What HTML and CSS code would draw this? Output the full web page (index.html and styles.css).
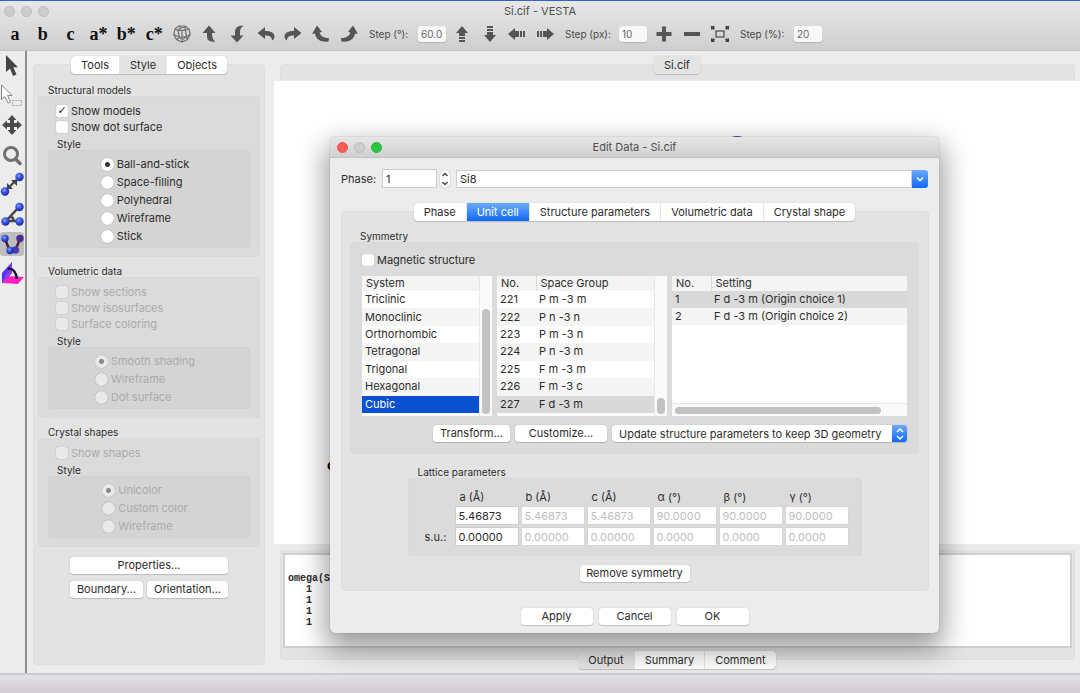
FILE: index.html
```html
<!DOCTYPE html>
<html lang="en">
<head>
    <meta charset="UTF-8">
    <meta name="viewport" content="width=device-width, initial-scale=1.0">
    <title>Si.cif - VESTA</title>
    <link rel="stylesheet" href="styles.css">
</head>
<body>
    <header class="app-header">
        <div class="titlebar">
            <div class="lights"><span class="light"></span><span class="light"></span><span class="light"></span></div>
            <h1 class="title">Si.cif - VESTA</h1>
        </div>
        <div class="toolbar">
            <div class="view-buttons">
                <button class="tool axis">a</button>
                <button class="tool axis">b</button>
                <button class="tool axis">c</button>
                <button class="tool axis">a*</button>
                <button class="tool axis">b*</button>
                <button class="tool axis">c*</button>
                <button class="tool" aria-label="Standard orientation">
                    <svg width="18" height="18" viewBox="0 0 18 18" fill="none" stroke="#707070" stroke-width="1.200"><path d="M5.500 1h6.500l4 3 1.200 5.500-2.700 5L9 17.200l-5.500-2.700L.8 9.500 2 4zM5 5.500l7.500-.5 1 6.500-7 1zM2 4l3 1.500M5.500 1 8 2.500h4L12 1M8 2.500 5 5.500M12 2.500l.5 2.500M16 4l-3.500 1M17.200 9.500l-3.700 2M14.500 14.500l-1-3M6.500 12.500 3.500 14.500M6.500 12.500.8 9.500M9 17.200l.5-2.700 4-3M9.500 14.500l-3-2M9 5.500v6.500"/></svg>
                </button>
                <button class="tool" aria-label="Rotate up">
                    <svg width="18" height="18" viewBox="0 0 18 18" fill="#555"><path d="M8 .5 14.500 8H11c0 3.500.5 6.500 3 8.500-4.500.8-8-1-8-5V8H1.500z"/></svg>
                </button>
                <button class="tool" aria-label="Rotate down">
                    <svg width="18" height="18" viewBox="0 0 18 18" fill="#555"><path d="M8 17.500 1.500 10.500H6V7c0-4 3-7 8.500-6-3 1.500-3.500 3.500-3.500 6v3.500h3.500z"/></svg>
                </button>
                <button class="tool" aria-label="Rotate left">
                    <svg width="18" height="18" viewBox="0 0 18 18" fill="#555"><path d="M.5 8 8 2v4c5.500-.5 9.500 2 9.500 5.500 0 2-1 3.300-2.500 4C15 11.500 12.500 10.500 8 10.500V14z"/></svg>
                </button>
                <button class="tool" aria-label="Rotate right">
                    <svg width="18" height="18" viewBox="0 0 18 18" fill="#555"><path d="M17.500 8 10 2v4C4.500 5.500.5 8 .5 11.500c0 2 1 3.300 2.500 4C3 11.500 5.500 10.500 10 10.500V14z"/></svg>
                </button>
                <button class="tool" aria-label="Rotate counterclockwise">
                    <svg width="18" height="18" viewBox="0 0 18 18" fill="#555"><path d="M5 .5 10 7 7.500 7.500c1 3.500 4 5.500 9.500 5.500l-.5 3.500C9 17.500 4 14.500 3 8.500L0 9z"/></svg>
                </button>
                <button class="tool" aria-label="Rotate clockwise">
                    <svg width="18" height="18" viewBox="0 0 18 18" fill="#555"><path d="M13 .5 8 7l2.500.5C9.500 11 6.500 13 1 13l.5 3.500C9 17.500 14 14.500 15 8.500l3 .5z"/></svg>
                </button>
            </div>
            <label class="step" for="stepDeg">Step (°):</label>
            <input class="step-input" id="stepDeg" type="text" value="60.0">
            <div class="move-buttons">
                <button class="tool" aria-label="Move up">
                    <svg width="18" height="18" viewBox="0 0 18 18" fill="#555"><path d="M9 1l6 7h-3v3H6V8H3zM6 12h6v2H6zM6 15h6v2H6z"/></svg>
                </button>
                <button class="tool" aria-label="Move down">
                    <svg width="18" height="18" viewBox="0 0 18 18" fill="#555"><path d="M9 17l6-7h-3V7H6v3H3zM6 4h6v2H6zM6 1h6v2H6z"/></svg>
                </button>
                <button class="tool" aria-label="Move left">
                    <svg width="18" height="18" viewBox="0 0 18 18" fill="#555"><path d="M0 9l7-6v3h4v6H7v3zM12 6h2v6h-2zM15 6h2v6h-2z"/></svg>
                </button>
                <button class="tool" aria-label="Move right">
                    <svg width="18" height="18" viewBox="0 0 18 18" fill="#555"><path d="M18 9l-7-6v3H7v6h4v3zM4 6h2v6H4zM1 6h2v6H1z"/></svg>
                </button>
            </div>
            <label class="step" for="stepPx">Step (px):</label>
            <input class="step-input" id="stepPx" type="text" value="10">
            <div class="zoom-buttons">
                <button class="tool" aria-label="Zoom in">
                    <svg width="18" height="18" viewBox="0 0 18 18" fill="#555"><path d="M7 1.500h4V7h5.500v4H11v5.500H7V11H1.500V7H7z"/></svg>
                </button>
                <button class="tool" aria-label="Zoom out">
                    <svg width="18" height="18" viewBox="0 0 18 18" fill="#555"><path d="M1 7h16v4H1z"/></svg>
                </button>
                <button class="tool" aria-label="Fit to screen">
                    <svg width="20" height="18" viewBox="0 0 20 18"><path d="M6 6h8v6H6z" fill="none" stroke="#666" stroke-width="1.500"/><path d="M1 1h4L4 2.500l1 1L3.500 5l-1-1L1 5zM19 1h-4l1 1.500-1 1L16.500 5l1-1L19 5zM1 17h4l-1-1.500 1-1L3.500 13l-1 1L1 13zM19 17h-4l1-1.500-1-1 1.500-1.500 1 1 1.500-1z" fill="#444"/></svg>
                </button>
            </div>
            <label class="step" for="stepPct">Step (%):</label>
            <input class="step-input" id="stepPct" type="text" value="20">
        </div>
    </header>

    <main class="workspace">
        <nav class="side-tools">
            <button class="side-tool" aria-label="Rotate mode">
                <svg width="24" height="26" viewBox="0 0 24 26"><path d="M6 2v17l4-3.500 3 7.500 3.500-1.500-3.200-7.300H18z" fill="#444"/></svg>
            </button>
            <button class="side-tool" aria-label="Select mode">
                <svg width="24" height="26" viewBox="0 0 24 26" stroke="#888"><path d="M1.500 3v14.500l3.300-3L8 21l2.500-1.200-3-6.300H12z" fill="#fff"/><path d="M12.500 18.500h9v5h-9z" fill="none" stroke="#aaa" stroke-dasharray="2 1"/></svg>
            </button>
            <button class="side-tool" aria-label="Translate mode">
                <svg width="24" height="26" viewBox="0 0 24 26"><path d="M12 3l4.500 5H14v3h3V8.500l5 4.500-5 4.500V15h-3v3h2.500L12 23l-4.500-5H10v-3H7v2.500L2 13l5-4.500V11h3V8H7.500z" fill="#4a4a4a"/></svg>
            </button>
            <button class="side-tool" aria-label="Magnify mode">
                <svg width="24" height="26" viewBox="0 0 24 26" fill="none" stroke="#707070"><circle cx="11" cy="12" r="6.500" stroke-width="3"/><path d="M15.500 17l4.500 4.500" stroke-width="3.500" stroke-linecap="round"/></svg>
            </button>
            <button class="side-tool" aria-label="Distance">
                <svg width="24" height="26" viewBox="0 0 24 26">
                    <defs><radialGradient id="ball" cx=".4" cy=".35" r=".65"><stop offset="0" stop-color="#8ea4ff"/><stop offset=".5" stop-color="#3450e4"/><stop offset="1" stop-color="#1a279c"/></radialGradient></defs>
                    <path d="M8 17.500l8-8.500" stroke="#444" stroke-width="2"/><path d="M11 9h6v6zM7 12v6h6z" fill="#444"/><circle cx="19.500" cy="6" r="4.200" fill="url(#ball)"/><circle cx="5" cy="20.500" r="4.200" fill="url(#ball)"/></svg>
            </button>
            <button class="side-tool" aria-label="Angle">
                <svg width="24" height="26" viewBox="0 0 24 26"><path d="M19 6 6 20h13M9.500 16c3-.5 4 1 4 4" fill="none" stroke="#444" stroke-width="2.500"/><circle cx="19.500" cy="6" r="4.200" fill="url(#ball)"/><circle cx="5.500" cy="20.500" r="4.200" fill="url(#ball)"/><circle cx="19.500" cy="20.500" r="4.200" fill="url(#ball)"/></svg>
            </button>
            <button class="side-tool selected" aria-label="Dihedral angle">
                <svg width="24" height="26" viewBox="0 0 24 26"><path d="M5 8l4.500 11h6L20 8" fill="none" stroke="#4c2222" stroke-width="2.500"/><circle cx="5" cy="7.500" r="3.700" fill="url(#ball)"/><circle cx="20" cy="7.500" r="3.700" fill="#4b2b96"/><circle cx="15.500" cy="19" r="3.700" fill="#4b3bb0"/><circle cx="10" cy="19.500" r="3.700" fill="url(#ball)"/></svg>
            </button>
            <button class="side-tool" aria-label="Interfacial angle">
                <svg width="24" height="26" viewBox="0 0 24 26"><path d="M2 23 8 16l16 1-6 7z" fill="#ff1fc0"/><path d="M2 23V13L12 2v11z" fill="#4a35f0"/><path d="M2 23 12 13V2L5 16z" fill="#8a3df0"/><path d="M8 9c5-1 8 3 9 10" fill="none" stroke="#1c1030" stroke-width="2.500"/></svg>
            </button>
        </nav>

        <aside class="style-pane">
            <div class="tabs" role="tablist">
                <button class="tab" role="tab">Tools</button>
                <button class="tab pressed" role="tab" aria-selected="true">Style</button>
                <button class="tab" role="tab">Objects</button>
            </div>
            <div class="panel style-panel">
                <h2 class="group-title">Structural models</h2>
                <div class="group">
                    <label class="check"><input type="checkbox" checked>Show models</label>
                    <label class="check"><input type="checkbox">Show dot surface</label>
                    <h3 class="sub-title">Style</h3>
                    <div class="subgroup">
                        <div class="radios">
                            <label class="radio"><input type="radio" name="model" checked>Ball-and-stick</label>
                            <label class="radio"><input type="radio" name="model">Space-filling</label>
                            <label class="radio"><input type="radio" name="model">Polyhedral</label>
                            <label class="radio"><input type="radio" name="model">Wireframe</label>
                            <label class="radio"><input type="radio" name="model">Stick</label>
                        </div>
                    </div>
                </div>
                <h2 class="group-title">Volumetric data</h2>
                <div class="group">
                    <label class="check disabled"><input type="checkbox" disabled>Show sections</label>
                    <label class="check disabled"><input type="checkbox" disabled>Show isosurfaces</label>
                    <label class="check disabled"><input type="checkbox" disabled>Surface coloring</label>
                    <h3 class="sub-title">Style</h3>
                    <div class="subgroup">
                        <div class="radios">
                            <label class="radio disabled"><input type="radio" name="volume" checked disabled>Smooth shading</label>
                            <label class="radio disabled"><input type="radio" name="volume" disabled>Wireframe</label>
                            <label class="radio disabled"><input type="radio" name="volume" disabled>Dot surface</label>
                        </div>
                    </div>
                </div>
                <h2 class="group-title">Crystal shapes</h2>
                <div class="group">
                    <label class="check disabled"><input type="checkbox" disabled>Show shapes</label>
                    <h3 class="sub-title">Style</h3>
                    <div class="subgroup">
                        <div class="radios">
                            <label class="radio disabled"><input type="radio" name="shape" checked disabled>Unicolor</label>
                            <label class="radio disabled"><input type="radio" name="shape" disabled>Custom color</label>
                            <label class="radio disabled"><input type="radio" name="shape" disabled>Wireframe</label>
                        </div>
                    </div>
                </div>
                <div class="panel-buttons">
                    <button class="button wide">Properties...</button>
                    <button class="button">Boundary...</button>
                    <button class="button">Orientation...</button>
                </div>
            </div>
        </aside>

        <section class="viewer">
            <div class="tabs">
                <button class="tab pressed">Si.cif</button>
            </div>
            <div class="panel document-bar"></div>
            <div class="canvas">
                <span class="atom"></span>
                <span class="origin">o</span>
            </div>
            <div class="panel output-panel">
                <pre class="output">
omega(S
   1
   1
   1
   1</pre>
            </div>
            <div class="tabs output-tabs" role="tablist">
                <button class="tab pressed" role="tab" aria-selected="true">Output</button>
                <button class="tab" role="tab">Summary</button>
                <button class="tab" role="tab">Comment</button>
            </div>
        </section>
    </main>
    <footer class="statusbar"></footer>

    <div class="dialog" role="dialog" aria-labelledby="dialogTitle">
        <div class="dialog-titlebar">
            <div class="lights"><span class="light red"></span><span class="light"></span><span class="light green"></span></div>
            <h2 class="title" id="dialogTitle">Edit Data - Si.cif</h2>
        </div>
        <div class="phase-row">
            <label for="phase">Phase:</label>
            <input class="field phase-number" id="phase" type="text" value="1">
            <button class="stepper" aria-label="Change phase">
                <svg width="8" height="14" viewBox="0 0 8 14" fill="none" stroke="#444" stroke-width="1.500"><path d="M1.500 4 4 1.500 6.500 4M1.500 10 4 12.500 6.500 10"/></svg>
            </button>
            <div class="combo">
                <input class="field" type="text" value="Si8" aria-label="Phase name">
                <button class="combo-button" aria-label="Show phases">
                    <svg width="10" height="8" viewBox="0 0 10 8" fill="none" stroke="#fff" stroke-width="1.500"><path d="M2 2.500 5 5.500 8 2.500"/></svg>
                </button>
            </div>
        </div>
        <div class="tabs dialog-tabs" role="tablist">
            <button class="tab" role="tab">Phase</button>
            <button class="tab active" role="tab" aria-selected="true">Unit cell</button>
            <button class="tab" role="tab">Structure parameters</button>
            <button class="tab" role="tab">Volumetric data</button>
            <button class="tab" role="tab">Crystal shape</button>
        </div>
        <div class="panel dialog-panel">
            <h3 class="group-title">Symmetry</h3>
            <div class="group symmetry">
                <label class="check"><input type="checkbox">Magnetic structure</label>
                <div class="lists">
                    <div class="list system-list">
                        <table class="full">
                            <thead><tr><th>System</th></tr></thead>
                            <tbody>
                                <tr><td>Triclinic</td></tr>
                                <tr><td>Monoclinic</td></tr>
                                <tr><td>Orthorhombic</td></tr>
                                <tr><td>Tetragonal</td></tr>
                                <tr><td>Trigonal</td></tr>
                                <tr><td>Hexagonal</td></tr>
                                <tr class="current"><td>Cubic</td></tr>
                            </tbody>
                        </table>
                        <div class="scrollbar"><span class="thumb long"></span></div>
                    </div>
                    <div class="list group-list">
                        <table class="full">
                            <thead><tr><th class="number">No.</th><th>Space Group</th></tr></thead>
                            <tbody>
                                <tr><td>221</td><td>P m -3 m</td></tr>
                                <tr><td>222</td><td>P n -3 n</td></tr>
                                <tr><td>223</td><td>P m -3 n</td></tr>
                                <tr><td>224</td><td>P n -3 m</td></tr>
                                <tr><td>225</td><td>F m -3 m</td></tr>
                                <tr><td>226</td><td>F m -3 c</td></tr>
                                <tr class="chosen"><td>227</td><td>F d -3 m</td></tr>
                            </tbody>
                        </table>
                        <div class="scrollbar"><span class="thumb short"></span></div>
                    </div>
                    <div class="list setting-list">
                        <table>
                            <thead><tr><th class="number">No.</th><th>Setting</th></tr></thead>
                            <tbody>
                                <tr class="chosen"><td>1</td><td>F d -3 m (Origin choice 1)</td></tr>
                                <tr><td>2</td><td>F d -3 m (Origin choice 2)</td></tr>
                            </tbody>
                        </table>
                        <div class="scrollbar horizontal"><span class="thumb"></span></div>
                    </div>
                </div>
                <div class="symmetry-actions">
                    <button class="button transform">Transform...</button>
                    <button class="button customize">Customize...</button>
                    <div class="select">
                        <select aria-label="Update mode">
                            <option>Update structure parameters to keep 3D geometry</option>
                        </select>
                        <span class="select-arrows">
                            <svg width="8" height="14" viewBox="0 0 8 14" fill="none" stroke="#fff" stroke-width="1.500"><path d="M1 5 4 2 7 5M1 9l3 3 3-3"/></svg>
                        </span>
                    </div>
                </div>
            </div>
            <div class="lattice">
                <h3 class="group-title">Lattice parameters</h3>
                <div class="group">
                    <table class="lattice-table">
                        <thead>
                            <tr><td></td><th>a (Å)</th><th>b (Å)</th><th>c (Å)</th><th>α (°)</th><th>β (°)</th><th>γ (°)</th></tr>
                        </thead>
                        <tbody>
                            <tr>
                                <th></th>
                                <td><input class="field" type="text" value="5.46873" aria-label="a"></td>
                                <td><input class="field" type="text" value="5.46873" aria-label="b" disabled></td>
                                <td><input class="field" type="text" value="5.46873" aria-label="c" disabled></td>
                                <td><input class="field" type="text" value="90.0000" aria-label="alpha" disabled></td>
                                <td><input class="field" type="text" value="90.0000" aria-label="beta" disabled></td>
                                <td><input class="field" type="text" value="90.0000" aria-label="gamma" disabled></td>
                            </tr>
                            <tr>
                                <th>s.u.:</th>
                                <td><input class="field" type="text" value="0.00000" aria-label="s.u. of a"></td>
                                <td><input class="field" type="text" value="0.00000" aria-label="s.u. of b" disabled></td>
                                <td><input class="field" type="text" value="0.00000" aria-label="s.u. of c" disabled></td>
                                <td><input class="field" type="text" value="0.0000" aria-label="s.u. of alpha" disabled></td>
                                <td><input class="field" type="text" value="0.0000" aria-label="s.u. of beta" disabled></td>
                                <td><input class="field" type="text" value="0.0000" aria-label="s.u. of gamma" disabled></td>
                            </tr>
                        </tbody>
                    </table>
                </div>
            </div>
            <button class="button remove">Remove symmetry</button>
        </div>
        <div class="dialog-buttons">
            <button class="button">Apply</button>
            <button class="button">Cancel</button>
            <button class="button">OK</button>
        </div>
    </div>
</body>
</html>
```
FILE: styles.css
```css
:root {
    --window: #ececec;
    --panel: #e3e3e3;
    --group: #dbdbdb;
    --subgroup: #d4d4d4;
    --text: #2c2c2c;
    --disabled: #ababab;
    --blue: linear-gradient(#6cabfb, #1068f8);
}

* {
    box-sizing: border-box;
    margin: 0;
    padding: 0;
}

body {
    font-family: Inter, "Liberation Sans", sans-serif;
    font-size: 11px;
    line-height: 16px;
    color: var(--text);
    background: var(--window);
    height: 100vh;
    display: flex;
    flex-direction: column;
    overflow: hidden;
}

button,
input,
select {
    font: inherit;
    color: inherit;
    border: none;
    background: none;
}

h1,
h2,
h3 {
    font-weight: 400;
}

/* window header */
.app-header {
    height: 51px;
    border-top: 1px solid #3563c4;
    border-bottom: 1px solid #c3c3c3;
    background: linear-gradient(#e7e7e7, #cfcfcf);
}

.titlebar,
.dialog-titlebar {
    display: grid;
    grid-template-columns: 1fr auto 1fr;
    align-items: center;
    height: 20px;
    color: #505050;
}

.title {
    font-size: 11px;
    line-height: 16px;
}

.lights {
    display: flex;
    gap: 6px;
    padding-left: 4px;
}

.light {
    width: 11px;
    height: 11px;
    border-radius: 50%;
    background: #cdcdcd;
    border: 1px solid #bdbdbd;
}

.light.red {
    background: #fc5b57;
    border-color: #ec5350;
}

.light.green {
    background: #2ac840;
    border-color: #25b539;
}

.toolbar {
    display: flex;
    align-items: center;
    height: 25px;
    padding-left: 1px;
}

.tool {
    display: flex;
    align-items: center;
    justify-content: center;
    height: 24px;
}

.axis {
    font-family: "Liberation Serif", serif;
    font-size: 18px;
    font-weight: 700;
    color: #111;
}

.view-buttons {
    display: grid;
    grid-template-columns: repeat(13, 1fr);
    width: 362px;
}

.move-buttons {
    display: grid;
    grid-template-columns: repeat(4, 1fr);
    width: 111px;
    margin-left: 2px;
}

.zoom-buttons {
    display: grid;
    grid-template-columns: repeat(3, 1fr);
    width: 84px;
    margin-left: 3px;
}

.step {
    width: 49px;
    margin-left: 6px;
    font-size: 10px;
    color: #4a4a4a;
}

.step-input {
    width: 28px;
    height: 16px;
    padding: 0 3px;
    border-radius: 3px;
    background: #f8f8f8;
    box-shadow: 0 1px 1px rgba(0, 0, 0, 0.15);
    font-size: 10px;
    color: #6a6a6a;
}

.move-buttons + .step,
.zoom-buttons + .step {
    width: 54px;
    margin-left: 6px;
}

/* workspace */
.workspace {
    flex: 1;
    display: flex;
    min-height: 0;
}

.side-tools {
    width: 25px;
    display: grid;
    grid-template-rows: repeat(8, 1fr);
    height: 237px;
}

.side-tool {
    display: flex;
    align-items: center;
    justify-content: center;
    min-height: 0;
    width: 24px;
}

.side-tool.selected {
    align-self: center;
    height: 24px;
    border-radius: 3px;
    background: #bdbdbd;
}

.panel {
    background: var(--panel);
    border: 1px solid #dfdfdf;
    border-radius: 4px;
}

.tabs {
    display: flex;
    align-self: center;
    z-index: 1;
    height: 18px;
    border-radius: 4px;
    background: #fff;
    box-shadow: 0 0 1px rgba(0, 0, 0, 0.3), 0 1px 1px rgba(0, 0, 0, 0.15);
    overflow: hidden;
}

.tab {
    padding: 0 10px;
    line-height: 18px;
    white-space: nowrap;
    border-right: 1px solid #e6e6e6;
}

.tab:last-child {
    border-right: none;
}

.tab.pressed {
    background: #e4e4e4;
}

.tab.active {
    background: var(--blue);
    color: #fff;
}

.style-pane {
    width: 240px;
    padding: 5px 0 8px 6px;
    border-left: 2px solid #8e8e8e;
    display: flex;
    flex-direction: column;
}

.style-panel {
    flex: 1;
    margin-top: -10px;
    padding: 11px 4px 0;
}

.group-title,
.sub-title {
    font-size: 10px;
    line-height: 12px;
    padding-left: 10px;
}

.group-title {
    margin-top: 8px;
}

.group {
    padding: 6px 9px 8px;
    border: 1px solid #d8d8d8;
    border-radius: 4px;
    background: var(--group);
}

.sub-title {
    margin-top: 3px;
    padding-left: 9px;
}

.subgroup {
    display: flex;
    justify-content: center;
    padding: 4px 8px 2px 0;
    border: 1px solid #d1d1d1;
    border-radius: 3px;
    background: var(--subgroup);
}

.check,
.radio {
    display: flex;
    align-items: center;
    gap: 3px;
    height: 16px;
    padding-left: 8px;
}

.radio {
    height: 18px;
    padding-left: 0;
}

.check input,
.radio input {
    appearance: none;
    width: 12px;
    height: 12px;
    border-radius: 2px;
    background: #fff;
    box-shadow: 0 0 1px rgba(0, 0, 0, 0.4);
}

.radio input {
    width: 13px;
    height: 13px;
    border-radius: 50%;
}

.check input:checked::after {
    content: "✓";
    display: block;
    font-family: "DejaVu Sans", sans-serif;
    font-size: 11px;
    font-weight: 700;
    line-height: 12px;
    text-align: center;
}

.radio input:checked {
    background: radial-gradient(circle, #333 2px, #fff 3px);
}

.disabled {
    color: var(--disabled);
}

.check.disabled input,
.radio.disabled input {
    background: #e9e9e9;
}

.radio.disabled input:checked {
    background: radial-gradient(circle, #888 2px, #e9e9e9 3px);
}

.button {
    height: 17px;
    border-radius: 3px;
    background: #fff;
    line-height: 17px;
    white-space: nowrap;
    box-shadow: 0 0 1px rgba(0, 0, 0, 0.3), 0 1px 1px rgba(0, 0, 0, 0.15);
}

.panel-buttons {
    display: grid;
    grid-template-columns: 73px 81px;
    gap: 7px 4px;
    justify-content: center;
    padding-top: 10px;
}

.button.wide {
    grid-column: span 2;
}

/* viewer */
.viewer {
    flex: 1;
    display: flex;
    flex-direction: column;
    margin-left: 9px;
    padding-top: 5px;
}

.document-bar {
    height: 16px;
    margin: -10px 5px 0 6px;
    border-bottom: none;
    border-radius: 4px 4px 0 0;
}

.document-bar + .canvas {
    margin-top: 1px;
}

.canvas {
    position: relative;
    flex: 1;
    background: #fff;
}

.atom {
    position: absolute;
    top: 55px;
    left: 449px;
    width: 28px;
    height: 28px;
    border-radius: 50%;
    background: #4a4a9a;
}

.origin {
    position: absolute;
    top: 376px;
    left: 53px;
    font-size: 14px;
    font-weight: 700;
    color: #000;
}

.output-panel {
    margin: 6px 5px 0 6px;
    padding: 2px 2px 11px;
    height: 110px;
}

.output {
    height: 95px;
    padding: 18px 3px 0;
    border: 2px solid #d0d0d0;
    background: #fff;
    font-family: "Liberation Mono", monospace;
    font-size: 10px;
    font-weight: 700;
    line-height: 11px;
}

.output-tabs {
    margin: -9px 0 4px;
}

.statusbar {
    height: 20px;
    border-top: 2px solid #cbcbcb;
    background: linear-gradient(#e4e2e6, #d0ced3);
}

/* edit data dialog */
.dialog {
    position: absolute;
    top: 137px;
    left: 330px;
    right: 141px;
    z-index: 2;
    display: flex;
    flex-direction: column;
    padding-bottom: 8px;
    border-radius: 5px;
    background: var(--window);
    box-shadow: 0 0 1px rgba(0, 0, 0, 0.5), 0 12px 28px 4px rgba(0, 0, 0, 0.4);
}

.dialog-titlebar {
    height: 21px;
    border-bottom: 1px solid #c3c3c3;
    border-radius: 5px 5px 0 0;
    background: linear-gradient(#e6e6e6, #d0d0d0);
}

.dialog-titlebar .lights {
    padding-left: 7px;
}

.phase-row {
    display: flex;
    align-items: center;
    height: 19px;
    margin: 11px 11px 0;
}

.phase-row label {
    width: 41px;
}

.field {
    width: 100%;
    height: 19px;
    padding: 0 3px;
    border: 1px solid #cdcdcd;
    background: #fff;
}

.field:disabled {
    border-color: #d6d6d6;
    color: #bebebe;
}

.phase-number {
    width: 55px;
}

.stepper {
    display: flex;
    align-items: center;
    justify-content: center;
    width: 10px;
    height: 18px;
    margin: 0 6px 0 3px;
    border-radius: 5px;
    background: #fff;
    box-shadow: 0 0 1px rgba(0, 0, 0, 0.5);
}

.combo {
    flex: 1;
    display: flex;
}

.combo-button {
    display: flex;
    align-items: center;
    justify-content: center;
    width: 16px;
    height: 18px;
    border-radius: 0 3px 3px 0;
    background: var(--blue);
}

.combo .field {
    flex: 1;
    height: 18px;
}

.dialog-tabs {
    margin-top: 15px;
}

.dialog-panel {
    display: flex;
    flex-direction: column;
    margin: -10px 10px 0 11px;
    padding: 10px 9px 8px 8px;
}

.symmetry {
    padding: 9px 11px 11px;
}

.symmetry .check {
    padding-left: 0;
}

.lists {
    display: flex;
    gap: 5px;
    height: 140px;
    margin-top: 8px;
}

.list {
    display: flex;
    align-items: flex-start;
    background: #fff;
}

.system-list {
    flex: 130;
}

.group-list {
    flex: 170;
}

.setting-list {
    flex: 235;
    flex-direction: column;
    justify-content: space-between;
}

.list table {
    width: 100%;
    flex: 1;
    border-collapse: collapse;
    line-height: 15px;
}

.setting-list table {
    flex: none;
}

.list .full {
    height: 137px;
}

.list th {
    height: 15px;
    padding-left: 4px;
    font-weight: 400;
    text-align: left;
    background: #f4f4f4;
}

.list .number {
    width: 39px;
    border-right: 1px solid #dadada;
}

.list td {
    padding: 1px 0 1px 3px;
}

.list tbody tr:nth-child(even) {
    background: #f5f5f5;
}

.list tbody .current {
    background: #0a50d0;
    color: #fff;
}

.list tbody .chosen {
    background: #d9d9d9;
}

.scrollbar {
    display: flex;
    justify-content: center;
    align-items: flex-end;
    width: 13px;
    height: 140px;
    padding-bottom: 2px;
    border-left: 1px solid #e8e8e8;
    background: #fafafa;
}

.thumb {
    width: 8px;
    border-radius: 4px;
    background: #c2c2c2;
}

.thumb.long {
    height: 105px;
}

.thumb.short {
    height: 16px;
}

.scrollbar.horizontal {
    justify-content: flex-start;
    width: 100%;
    height: 13px;
    padding: 0 0 2px 3px;
    border-left: none;
    border-top: 1px solid #e8e8e8;
}

.horizontal .thumb {
    width: 89%;
    height: 7px;
}

.symmetry-actions {
    display: flex;
    justify-content: flex-end;
    gap: 5px;
    margin-top: 9px;
}

.transform {
    width: 77px;
}

.customize {
    width: 92px;
}

.select {
    position: relative;
    width: 295px;
}

.select select {
    appearance: none;
    display: block;
    width: 100%;
    height: 17px;
    padding-left: 7px;
    border-radius: 3px;
    background: #fff;
    box-shadow: 0 0 1px rgba(0, 0, 0, 0.3), 0 1px 1px rgba(0, 0, 0, 0.15);
}

.select-arrows {
    position: absolute;
    top: 0;
    right: 0;
    display: flex;
    align-items: center;
    justify-content: center;
    width: 15px;
    height: 17px;
    border-radius: 0 3px 3px 0;
    background: var(--blue);
    pointer-events: none;
}

.lattice {
    align-self: center;
    margin-top: 4px;
}

.lattice .group {
    padding: 10px 11px 8px 11px;
}

.lattice-table {
    border-spacing: 0;
}

.lattice-table th {
    font-weight: 400;
    text-align: left;
    padding-left: 6px;
    line-height: 16px;
}

.lattice-table tbody th {
    width: 34px;
    padding-left: 5px;
}

.lattice-table td {
    width: 66px;
    padding: 1px;
}

.lattice-table td:first-child {
    width: 34px;
}

.lattice-table .field {
    display: block;
}

.remove {
    align-self: center;
    width: 110px;
    margin-top: 9px;
}

.dialog-buttons {
    display: flex;
    justify-content: center;
    gap: 6px;
    margin-top: 17px;
}

.dialog-buttons .button {
    width: 72px;
}
```
